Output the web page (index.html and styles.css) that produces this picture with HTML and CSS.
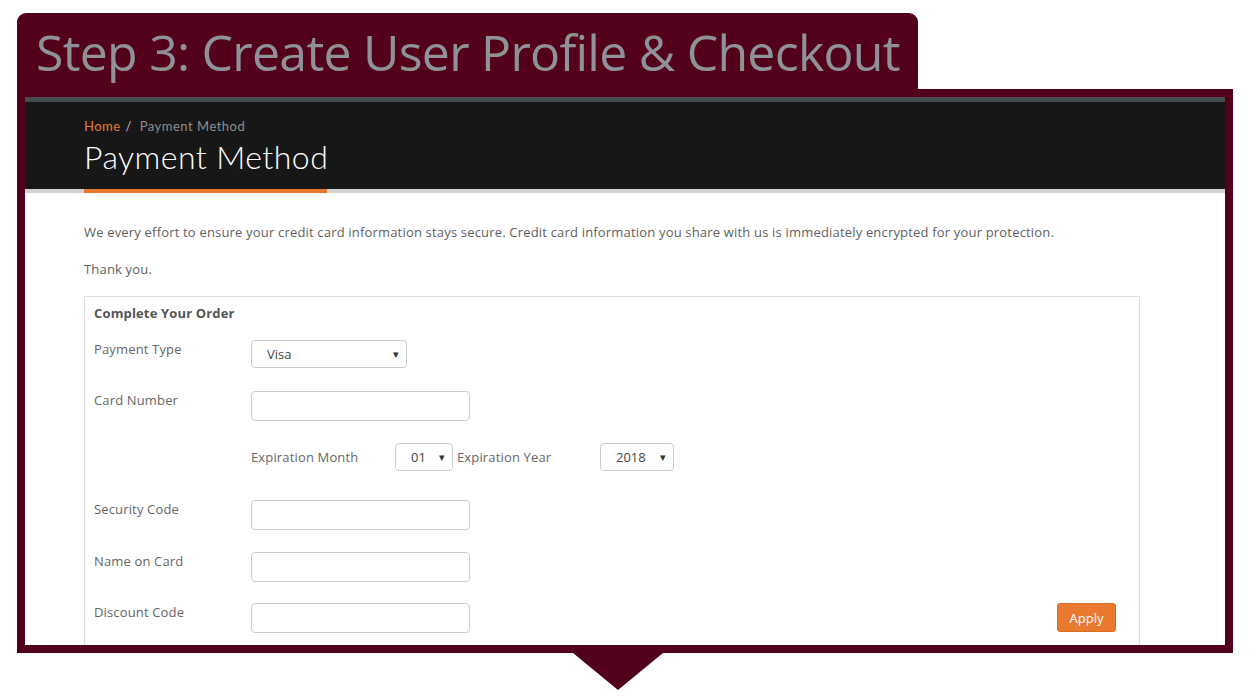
FILE: index.html
```html
<!DOCTYPE html>
<html>
<head>
    <title>Step 3: Create User Profile &amp; Checkout</title>
    <link rel="stylesheet" href="styles.css">
</head>
<body>
    <div class="step-tab">
        <h1>Step 3: Create User Profile &amp; Checkout</h1>
    </div>
    <div class="step-frame">
        <div class="page-header">
            <div class="breadcrumb"><a href="#">Home</a> <span class="sep">/</span> <span class="current">Payment Method</span></div>
            <h2>Payment Method</h2>
        </div>
        <div class="header-strip"><div class="strip-accent"></div></div>

        <div class="content">
            <p>We every effort to ensure your credit card information stays secure. Credit card information you share with us is immediately encrypted for your protection.</p>
            <p>Thank you.</p>

            <form class="order-panel" id="orderForm">
                <div class="panel-title">Complete Your Order</div>

                <div class="form-row first">
                    <label for="paymentType">Payment Type</label>
                    <span class="select-wrap">
                        <select id="paymentType" class="select-visa">
                            <option>Visa</option>
                            <option>MasterCard</option>
                            <option>American Express</option>
                        </select>
                    </span>
                </div>

                <div class="form-row card-row">
                    <label for="cardNumber">Card Number</label>
                    <input type="text" id="cardNumber">
                </div>

                <div class="form-row expiry-row">
                    <span class="inline-label month-label">Expiration Month</span>
                    <span class="select-wrap">
                        <select class="select-month">
                            <option>01</option>
                            <option>02</option>
                            <option>03</option>
                        </select>
                    </span>
                    <span class="inline-label year-label">Expiration Year</span>
                    <span class="select-wrap">
                        <select class="select-year">
                            <option>2018</option>
                            <option>2019</option>
                            <option>2020</option>
                        </select>
                    </span>
                </div>

                <div class="form-row security-row">
                    <label for="securityCode">Security Code</label>
                    <input type="text" id="securityCode">
                </div>

                <div class="form-row">
                    <label for="nameOnCard">Name on Card</label>
                    <input type="text" id="nameOnCard">
                </div>

                <div class="form-row discount-row">
                    <label for="discountCode">Discount Code</label>
                    <input type="text" id="discountCode">
                    <button type="button" class="apply-button">Apply</button>
                </div>
            </form>
        </div>
    </div>
    <div class="step-arrow"></div>
</body>
</html>
```

FILE: styles.css
```css
body {
    margin: 0;
    background-color: #ffffff;
    font-family: 'Open Sans', Arial, sans-serif;
    font-size: 13px;
    letter-spacing: 0.15px;
    color: #666666;
}

/* step tab + frame */
.step-tab {
    margin: 13px 0 0 17px;
    width: 901px;
    height: 76px;
    background-color: #53001b;
    border-radius: 9px 9px 0 0;
    box-sizing: border-box;
    padding-left: 19px;
}

.step-tab h1 {
    margin: 0;
    font-family: 'Open Sans', Arial, sans-serif;
    font-weight: 400;
    font-size: 50px;
    letter-spacing: -0.75px;
    line-height: 78px;
    color: #8f9399;
    white-space: nowrap;
}

.step-frame {
    margin-left: 17px;
    width: 1216px;
    height: 564px;
    box-sizing: border-box;
    border: 8px solid #53001b;
    overflow: hidden;
    background-color: #ffffff;
}

.step-arrow {
    margin-left: 573px;
    width: 0;
    height: 0;
    border-left: 45px solid transparent;
    border-right: 45px solid transparent;
    border-top: 37px solid #53001b;
}

/* dark page header */
.page-header {
    background-color: #171717;
    border-top: 5px solid #464b50;
    padding: 15px 0 14px 59px;
    font-family: Lato, Arial, sans-serif;
}

.breadcrumb {
    font-size: 13px;
    line-height: 18px;
    letter-spacing: 0.5px;
    color: #8f8f8f;
}

.breadcrumb a {
    color: #e8792b;
    text-decoration: none;
}

.breadcrumb .sep {
    color: #bdbdbd;
    margin: 0 4px 0 1px;
}

.page-header h2 {
    margin: 4px 0 0 0;
    font-weight: 300;
    font-size: 32px;
    line-height: 36px;
    letter-spacing: 0.45px;
    color: #ffffff;
}

.header-strip {
    height: 4px;
    background-color: #d2d2d2;
    padding-left: 59px;
}

.strip-accent {
    width: 243px;
    height: 4px;
    background-color: #e8792b;
}

/* content */
.content {
    padding: 29px 0 0 59px;
}

.content p {
    margin: 0 0 17px 0;
    line-height: 20px;
    letter-spacing: 0.18px;
    color: #5f5f5f;
}

.order-panel {
    width: 1056px;
    box-sizing: border-box;
    border: 1px solid #dddddd;
    padding: 6px 23px 40px 9px;
}

.panel-title {
    font-weight: 700;
    line-height: 20px;
    color: #555555;
}

.form-row {
    display: flex;
    align-items: flex-start;
    margin-top: 22px;
}

.form-row.first {
    margin-top: 17px;
}

.form-row.card-row {
    margin-top: 23px;
}

.form-row.security-row {
    margin-top: 29px;
}

.form-row.discount-row {
    margin-top: 21px;
}

.form-row label {
    width: 157px;
    flex-shrink: 0;
    line-height: 18px;
    color: #666666;
}

.expiry-row {
    align-items: center;
    padding-left: 157px;
}

.inline-label {
    line-height: 18px;
    color: #666666;
}

.month-label {
    width: 144px;
}

.year-label {
    width: 143px;
    margin-left: 4px;
}

input[type="text"] {
    width: 219px;
    height: 30px;
    box-sizing: border-box;
    border: 1px solid #cccccc;
    border-radius: 4px;
    padding: 0 10px;
    font-family: 'Open Sans', Arial, sans-serif;
    font-size: 13px;
}

.select-wrap {
    position: relative;
    display: inline-block;
}

.select-wrap::after {
    content: "\25BE";
    position: absolute;
    right: 8px;
    top: 6px;
    font-size: 11px;
    color: #333333;
    pointer-events: none;
}

select {
    appearance: none;
    -webkit-appearance: none;
    height: 28px;
    box-sizing: border-box;
    border: 1px solid #cccccc;
    border-radius: 4px;
    background-color: #ffffff;
    padding: 0 0 0 15px;
    font-family: 'Open Sans', Arial, sans-serif;
    font-size: 13px;
    color: #444444;
}

.select-visa {
    width: 156px;
}

.select-month {
    width: 58px;
}

.select-year {
    width: 74px;
}

.apply-button {
    margin-left: auto;
    width: 59px;
    height: 29px;
    border: 1px solid #d96c22;
    border-radius: 3px;
    background-color: #e8792f;
    color: #ffffff;
    font-family: 'Open Sans', Arial, sans-serif;
    font-size: 13px;
    cursor: pointer;
}

.apply-button:hover {
    background-color: #d96c22;
}
```
